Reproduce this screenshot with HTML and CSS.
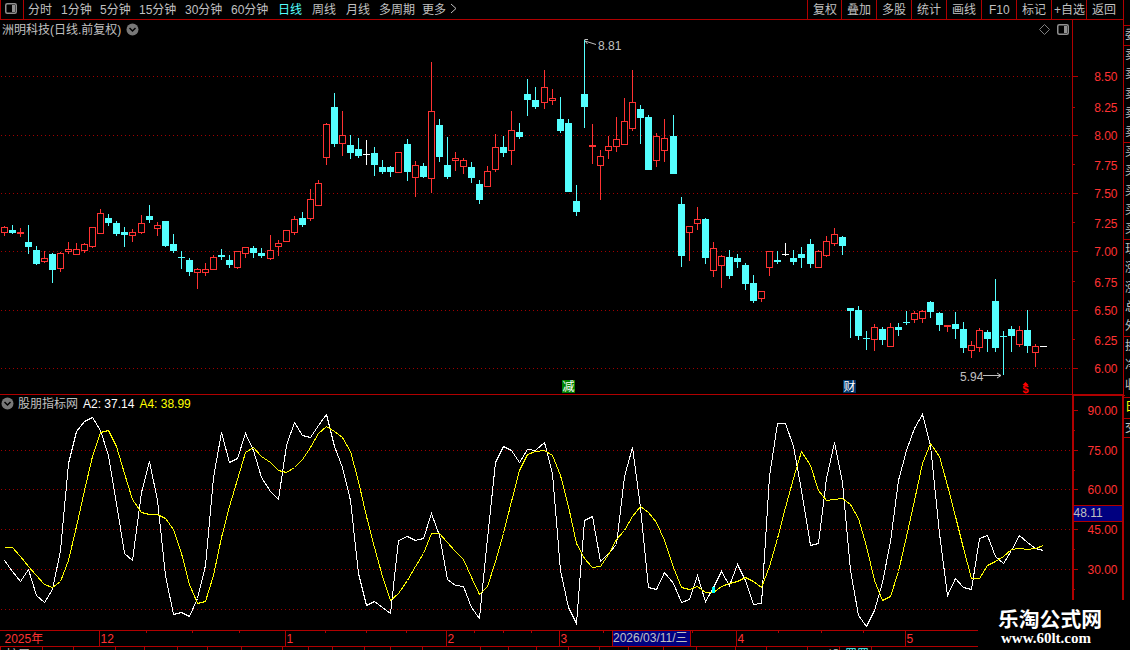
FILE: index.html
```
<!DOCTYPE html>
<html lang="zh-CN">

<head>
    <meta charset="UTF-8">
    <title>洲明科技 日线</title>
    <link rel="stylesheet" href="styles.css">
</head>

<body>
    <div class="terminal">
        <main class="main">
            <nav class="toolbar">
                <div class="toolbar__toggle">
                    <svg width="12" height="11" viewBox="0 0 12 11"><rect x=".75" y=".75" width="10.5" height="9.5" rx="1.5" fill="none" stroke="#909090" stroke-width="1.5"/><rect x="7" y="2" width="3" height="7" fill="#909090"/></svg>
                </div>
                <div class="periods">
                    <span>分时</span>
                    <span>1分钟</span>
                    <span>5分钟</span>
                    <span>15分钟</span>
                    <span>30分钟</span>
                    <span>60分钟</span>
                    <span class="is-active">日线</span>
                    <span>周线</span>
                    <span>月线</span>
                    <span>多周期</span>
                    <span>更多</span>
                    <svg width="7" height="11" viewBox="0 0 7 11"><path d="M1 1l5 4.5L1 10" fill="none" stroke="#c0c0c0"/></svg>
                </div>
                <div class="tools">
                    <span>复权</span>
                    <span>叠加</span>
                    <span>多股</span>
                    <span>统计</span>
                    <span>画线</span>
                    <span class="tools__f10">F10</span>
                    <span>标记</span>
                    <span>+自选</span>
                    <span>返回</span>
                </div>
            </nav>

            <section class="pane">
                <svg id="price" class="pane__chart" width="1123" height="374" viewBox="0 20 1123 374"></svg>
                <header class="pane__title">
                    <span>洲明科技(日线.前复权)</span>
                    <svg width="13" height="13" viewBox="0 0 13 13"><circle cx="6.5" cy="6.5" r="6" fill="#787878"/><path d="M3.5 5l3 3 3-3" fill="none" stroke="#000" stroke-width="1.5"/></svg>
                    <div class="pane__buttons">
                        <svg width="11" height="11" viewBox="0 0 11 11"><path d="M5.5 .5l5 5-5 5-5-5z" fill="none" stroke="#808080"/></svg>
                        <svg width="12" height="11" viewBox="0 0 12 11"><rect x=".75" y=".75" width="10.5" height="9.5" rx="1.5" fill="none" stroke="#909090" stroke-width="1.5"/><rect x="7" y="2" width="3" height="7" fill="#909090"/></svg>
                    </div>
                </header>
            </section>

            <section class="pane">
                <svg id="indicator" class="pane__chart" width="1125" height="236" viewBox="0 394 1125 236"></svg>
                <header class="pane__title pane__title--indicator">
                    <svg width="13" height="13" viewBox="0 0 13 13"><circle cx="6.5" cy="6.5" r="6" fill="#787878"/><path d="M3.5 5l3 3 3-3" fill="none" stroke="#000" stroke-width="1.5"/></svg>
                    <span>股朋指标网</span>
                    <span class="a2">A2: 37.14</span>
                    <span class="a4">A4: 38.99</span>
                </header>
            </section>

            <svg id="dates" class="dates" width="1123" height="20" viewBox="0 630 1123 20"></svg>
        </main>

        <aside class="side">
            <div class="side__group side__group--one">委</div>
            <div class="side__group"><i>卖</i><i>卖</i><i>卖</i><i>卖</i><i>卖</i></div>
            <div class="side__group"><i>买</i><i>买</i><i>买</i><i>买</i><i>买</i></div>
            <div class="side__group"><i>现</i><i>涨</i><i>涨</i><i>总</i><i>外</i></div>
            <div class="side__group side__group--short"><i>换</i><i>净</i><i>收</i></div>
            <div class="side__group side__group--one side__group--yellow">日</div>
            <div class="side__group side__group--last">交</div>
        </aside>

        <div class="watermark">
            <strong>乐淘公式网</strong>
            <b>www.60lt.com</b>
        </div>
    </div>
    <script src="chart.js"></script>
</body>

</html>
```
FILE: styles.css
```
body {
    margin: 0;
    background: #000;
    color: #c0c0c0;
    font: 12px/16px "Liberation Sans", "Noto Sans CJK SC", sans-serif;
    overflow: hidden;
}

svg {
    display: block;
    flex: none;
}

.terminal {
    position: relative;
    display: grid;
    grid-template-columns: 1123px 7px;
    height: 650px;
    overflow: hidden;
}

.main {
    display: grid;
    grid-template-columns: 1123px;
    grid-template-rows: 20px 374px 236px 20px;
}

/* toolbar */
.toolbar {
    display: flex;
    box-sizing: border-box;
    height: 20px;
    border-bottom: 1px solid #b00000;
    white-space: nowrap;
}
.toolbar__toggle {
    box-sizing: border-box;
    width: 24px;
    padding: 3px 0 0 4px;
    border: 1px solid #b00000;
    border-width: 0 1px;
}
.periods {
    display: grid;
    grid-template-columns: 33px 39px 39px 46px 46px 47px 34px 34px 33px 43px 28px 10px;
    padding: 2px 0 0 4px;
    flex: 1;
}
.periods svg {
    margin-top: 1px;
}
.is-active {
    color: #54ffff;
}
.tools {
    display: grid;
    grid-template-columns: 34px repeat(7, 35px) 37px;
}
.tools span {
    padding: 2px 0 0 5px;
    border-left: 1px solid #b00000;
}
.tools span:nth-child(8) {
    padding-left: 2px;
}
.tools .tools__f10 {
    padding-left: 7px;
}

/* chart panes */
.pane {
    position: relative;
}
.pane__chart {
    overflow: visible;
}
.pane__title {
    position: absolute;
    top: 1px;
    left: 2px;
    display: flex;
    align-items: center;
    gap: 5px;
    width: 1067px;
}
.pane__title span {
    position: relative;
    top: 1px;
}
.pane__title--indicator {
    left: 1px;
}
.pane__title--indicator svg {
    margin-right: -1px;
}
.pane__buttons {
    display: flex;
    gap: 7px;
    margin-left: auto;
}
.a2 {
    color: #fff;
}
.a4 {
    color: #ffff00;
}
.dates {
    overflow: hidden;
}

.dot {
    stroke: #a00000;
    stroke-dasharray: 1 3;
}
.frame {
    fill: #b00000;
}
.up {
    fill: #ff3232;
}
.down {
    fill: #54ffff;
}
.flat {
    fill: #fff;
}
.hollow {
    fill: #000;
}
.cursor {
    fill: #000080;
}
.mark-reduce {
    fill: #008000;
}
.mark-report {
    fill: #003468;
}
.mark-signal {
    fill: #00ffff;
}
.mark-dividend {
    fill: #ff0000;
    font-size: 11px;
    font-weight: bold;
}
.label {
    fill: #ff3232;
}
.grey {
    fill: #c0c0c0;
}
.arrow {
    fill: none;
    stroke: #c0c0c0;
}
.curve {
    fill: none;
    stroke-width: 1;
    shape-rendering: crispEdges;
}

/* clipped quote column */
.side {
    overflow: hidden;
    width: 7px;
    padding-top: 25px;
    box-sizing: border-box;
}
.side__group {
    display: flex;
    flex-direction: column;
    box-sizing: border-box;
    height: 97px;
    padding-left: 2px;
    border-top: 1px solid #b00000;
    line-height: 19.3px;
}
.side__group i {
    font-style: normal;
}
.side__group--one {
    height: 20px;
}
.side__group--short {
    height: 61px;
}
.side__group--yellow {
    height: 21px;
    color: #ffff00;
}
.side__group--last {
    height: 20px;
    border-bottom: 1px solid #b00000;
}

.watermark {
    position: absolute;
    left: 978px;
    top: 600px;
    box-sizing: border-box;
    width: 152px;
    height: 50px;
    padding: 6px 0 0 20px;
    background: #000;
    color: #fff;
}
.watermark strong {
    display: block;
    font: bold 20.8px/24px "Noto Sans CJK SC", sans-serif;
    white-space: nowrap;
}
.watermark b {
    display: block;
    padding-left: 3px;
    font: bold 15px/17px "Liberation Serif", serif;
}
```
FILE: chart.js
```
// type, high, body top, body bottom, low
const candles = `
r 226 227 233 236|c 225 230 233 234|r 228 232 234 237|c 225 242 247 254|c 246 250 264 265|r 251 258 262 263
c 253 254 270 283|r 252 253 269 272|r 242 249 252 254|r 243 249 255 255|r 243 244 251 253|r 227 227 247 248
r 209 213 234 234|c 214 218 223 226|c 221 223 234 236|c 227 232 235 247|r 229 232 236 242|r 215 223 233 234
c 205 216 220 223|r 222 225 229 236|c 221 221 246 247|c 234 244 251 253|c 251 257 258 269|c 258 260 272 276
r 268 269 273 289|r 263 269 273 276|r 255 257 270 270|c 249 255 257 260|c 255 260 265 268|r 251 251 268 269
r 247 247 254 258|c 246 248 253 258|c 248 253 256 258|r 235 250 259 260|r 240 243 247 256|r 230 230 242 242
r 216 219 233 235|c 212 218 225 227|r 189 199 219 221|r 180 183 206 206|r 123 124 158 165|c 93 107 144 147
r 111 135 144 156|c 135 145 153 159|c 138 149 156 158|w 140 154 155 165|c 147 153 165 176|c 160 167 172 174
c 166 167 172 177|r 152 152 173 173|c 139 144 172 181|r 161 165 178 197|c 163 166 177 178|r 62 111 179 193
c 119 125 157 162|c 137 165 177 179|r 152 158 161 171|r 158 160 167 174|c 162 167 178 183|c 180 184 200 204
r 166 171 187 187|r 134 147 170 172|c 136 147 153 157|r 111 130 151 165|c 123 132 137 139|c 79 94 100 116
c 87 100 107 109|r 70 87 103 109|r 89 98 101 105|c 97 119 131 133|c 119 123 192 192|c 185 201 212 216
c 40 94 107 128|r 124 145 147 164|r 150 156 166 200|r 136 146 151 159|r 117 139 147 152|r 98 121 145 145
r 70 102 129 131|c 105 109 118 144|c 115 117 170 170|r 133 136 161 167|r 119 138 151 162|c 115 136 174 174
c 197 204 256 267|r 226 226 233 261|r 207 219 224 230|c 218 219 258 264|r 242 248 271 277|r 255 256 266 288
c 250 257 276 279|c 254 258 262 268|c 263 265 284 290|c 275 283 301 303|r 291 291 299 302|r 251 251 268 276
c 251 260 262 264|w 243 254 255 256|c 250 258 262 265|c 247 254 258 268|c 239 244 264 268|r 250 251 268 268
r 236 241 256 257|r 228 234 244 246|c 236 237 246 255|c 308 308 311 338|c 306 310 336 340|c 331 338 339 350
r 324 327 340 351|c 327 329 340 345|r 323 327 347 347|c 323 327 330 336|c 311 322 323 325|r 311 313 320 323
r 310 311 319 323|c 301 302 312 318|c 312 313 325 331|r 325 325 327 332|c 312 324 329 339|c 322 329 348 353
r 341 345 351 358|r 328 330 348 352|c 330 332 339 352|c 279 301 348 352|c 331 336 337 375|c 326 329 336 352
r 326 330 345 347|c 310 330 346 353|r 344 346 353 367|w 346 346 347 347
`.trim().split(/[|\n]/).map(s => s.split(" "));

const a2 = [560, 571, 581, 569, 595, 602, 589, 550, 463, 431, 421, 417, 430, 455, 503, 553, 560, 492, 461, 500, 575, 614, 612, 616, 598, 565, 477, 432, 462, 458, 433, 450, 477, 491, 499, 445, 422, 435, 437, 425, 414, 446, 467, 500, 573, 605, 601, 607, 613, 540, 536, 540, 538, 513, 535, 579, 585, 586, 607, 618, 538, 462, 446, 450, 462, 449, 450, 442, 473, 570, 607, 623, 520, 516, 561, 553, 544, 476, 447, 507, 587, 589, 572, 583, 602, 599, 575, 601, 587, 571, 585, 564, 580, 604, 603, 476, 423, 423, 446, 490, 545, 543, 478, 442, 482, 570, 615, 626, 610, 582, 541, 480, 450, 428, 414, 445, 533, 595, 578, 587, 589, 538, 535, 556, 563, 550, 535, 542, 548, 550];
const a4 = [547, 547, 556, 566, 575, 584, 587, 581, 560, 526, 490, 456, 432, 430, 446, 473, 499, 512, 514, 514, 518, 529, 553, 584, 603, 601, 575, 537, 506, 479, 452, 447, 456, 462, 470, 472, 467, 459, 447, 433, 426, 431, 437, 451, 481, 516, 547, 576, 600, 593, 580, 566, 553, 533, 533, 542, 551, 559, 577, 594, 586, 561, 533, 501, 470, 454, 451, 450, 455, 475, 506, 543, 558, 567, 566, 554, 539, 530, 516, 506, 512, 522, 540, 567, 587, 589, 586, 592, 592, 586, 583, 581, 577, 581, 587, 566, 538, 507, 478, 451, 465, 490, 500, 499, 498, 504, 518, 546, 580, 600, 596, 571, 536, 500, 463, 443, 456, 485, 516, 548, 578, 578, 565, 561, 556, 549, 548, 549, 548, 545];

const xOf = i => 4 + 8 * i + Math.floor((i + 0.5) / 16.64);
const rect = (x, y, w, h, cls) => `<rect class="${cls}" x="${x}" y="${y}" width="${w}" height="${h}"/>`;
const text = (x, y, s, cls, extra = "") => `<text class="${cls}" x="${x}" y="${y}" ${extra}>${s}</text>`;
const dots = y => `<path class="dot" d="M1 ${y + 0.5}H1071"/>`;

function drawPrice() {
    let out = [76, 135, 193, 251, 310, 368].map(dots).join("");
    candles.forEach(([type, ...v], i) => {
        const [high, top, bottom, low] = v.map(Number);
        const x = xOf(i);
        const cls = { r: "up", c: "down", w: "flat" }[type];
        out += rect(x, high, 1, low - high, cls) + rect(x - 3, top, 7, bottom - top, cls);
        if (type == "r" && bottom - top > 2) out += rect(x - 2, top + 1, 5, bottom - top - 2, "hollow");
    });

    // price scale
    out += rect(1072, 20, 1, 374, "frame") + rect(1123, 0, 1, 394, "frame");
    [76, 107, 135, 164, 193, 222, 251, 281, 310, 339, 368].forEach((y, i) => {
        out += rect(1073, y, i % 2 ? 2 : 5, 1, "frame");
    });
    [76, 107, 135, 165, 193, 223, 251, 282, 310, 340, 368].forEach((y, i) => {
        out += text(1117.5, y + 5, (8.5 - i * 0.25).toFixed(2), "label", 'text-anchor="end"');
    });

    // high / low marks
    out += text(598, 50, "8.81", "grey") + '<path class="arrow" d="M596 44.5l-11-3.500M588 39.5h-3.500M585 41l2.500 3"/>';
    out += text(960, 381, "5.94", "grey") + '<path class="arrow" d="M983 375.500h18M997 373l4 2.500-4 2.500"/>';

    // event marks
    out += rect(562, 380, 13, 13, "mark-reduce") + text(562.5, 391, "减", "flat");
    out += rect(843, 380, 13, 13, "mark-report") + text(843.5, 391, "财", "flat");
    out += text(1022.5, 393, "$", "mark-dividend") + '<path class="mark-dividend" d="M1022.500 385l3-3 3 3z"/>';
    document.getElementById("price").innerHTML = out;
}

function drawIndicator() {
    let out = [450, 489, 529, 569, 609].map(dots).join("");
    const line = (values, color) => `<polyline class="curve" stroke="${color}" points="${values.map((y, i) => (xOf(i) + 0.5) + "," + (y + 0.5)).join(" ")}"/>`;
    out += line(a2, "#fff") + line(a4, "#ff0");
    out += rect(712, 587, 3, 6, "mark-signal");
    out += rect(0, 394, 1124, 1, "frame") + rect(1072, 395, 53, 1, "frame");
    out += rect(1072, 395, 2, 205, "frame") + rect(1122, 395, 2, 205, "frame");
    [410, 430, 450, 470, 489, 509, 529, 549, 569, 589].forEach((y, i) => {
        out += rect(1074, y, i % 2 ? 1 : 4, 1, "frame");
    });
    [90, 75, 60, 45, 30].forEach((n, i) => {
        out += text(1117.5, [415, 455, 494, 534, 574][i], n.toFixed(2), "label", 'text-anchor="end"');
    });
    out += rect(1074, 505, 49, 17, "frame") + rect(1074, 506, 48, 15, "cursor") + text(1073.5, 517, "48.11", "grey");
    document.getElementById("indicator").innerHTML = out;
}

function drawDates() {
    let out = rect(0, 630, 1123, 1, "frame") + rect(0, 646, 1123, 1, "frame");
    [146, 192, 239, 325, 366, 406, 474, 503, 531, 603, 692, 778, 821, 863].forEach(x => out += rect(x, 631, 1, 2, "frame"));
    [[99, "12"], [285, "1"], [446, "2"], [559, "3"], [736, "4"], [905, "5"]].forEach(([x, s]) => {
        out += rect(x, 631, 1, 15, "frame") + text(x + 1.5, 643, s, "label");
    });
    out += text(4.5, 643, "2025年", "label");
    out += rect(612, 631, 79, 15, "frame") + rect(613, 631, 77, 15, "cursor") + text(613, 642, "2026/03/11/三", "grey");
    // tops of the index bar below
    [0, 42, 73, 115, 144, 177, 207, 241, 282, 308, 332, 364, 390, 422, 480, 508, 536, 568, 599, 628, 663, 696, 735, 766, 807, 839, 871].forEach(x => out += rect(x, 647, 1, 3, "frame"));
    out += text(6, 659, "扩展", "grey") + text(828, 660, "设", "grey") + text(845, 659, "置置", "down");
    document.getElementById("dates").innerHTML = out;
}

drawPrice();
drawIndicator();
drawDates();
```
